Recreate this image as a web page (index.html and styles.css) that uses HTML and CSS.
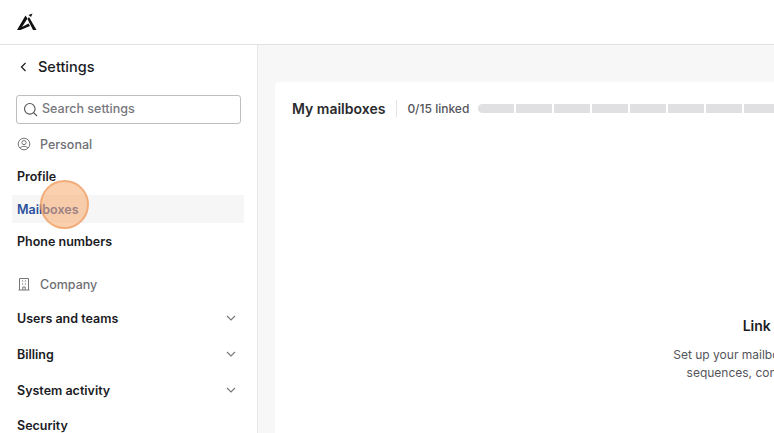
FILE: index.html
```html
<!DOCTYPE html>
<html lang="en">
<head>
  <meta charset="UTF-8" />
  <meta name="viewport" content="width=device-width, initial-scale=1" />
  <title>Settings - My mailboxes</title>
  <link rel="stylesheet" href="styles.css">
</head>
<body>
  <header class="topbar">
    <svg class="logo" width="22" height="18" viewBox="0 0 22 18">
      <path d="M1 17 L9.5 2.5 L11.5 5.5 L6 14 L12.5 10.5 L14 13 L4.5 17 Z" fill="#111"/>
      <path d="M11.5 6 L13 4 L20.5 17 L17 17 Z" fill="#111"/>
      <path d="M12.5 2 L16.5 0.5 L15 4 Z" fill="#111"/>
    </svg>
  </header>

  <div class="layout">
    <aside class="sidebar">
      <div class="back">
        <svg width="8" height="10" viewBox="0 0 8 10"><path d="M5.5 1 L1.5 5 L5.5 9" fill="none" stroke="#222" stroke-width="1.3"/></svg>
        <span>Settings</span>
      </div>

      <div class="search">
        <svg width="15" height="15" viewBox="0 0 15 15"><circle cx="6.8" cy="6.8" r="5.3" fill="none" stroke="#555" stroke-width="1.1"/><path d="M10.6 10.6 L14 14" stroke="#555" stroke-width="1.1"/></svg>
        <span>Search settings</span>
      </div>

      <div class="group-label personal">
        <svg width="14" height="14" viewBox="0 0 14 14"><circle cx="7" cy="7" r="5.8" fill="none" stroke="#777" stroke-width="1"/><circle cx="7" cy="5.6" r="2.1" fill="none" stroke="#777" stroke-width="1"/><path d="M3.2 11 C4.2 8.8 9.8 8.8 10.8 11" fill="none" stroke="#777" stroke-width="1"/></svg>
        <span>Personal</span>
      </div>
      <a class="item profile">Profile</a>
      <a class="item active">Mailboxes</a>
      <a class="item">Phone numbers</a>

      <div class="group-label company">
        <svg width="14" height="14" viewBox="0 0 14 14"><path d="M2.5 13 V1.5 H11.5 V13 M1.5 13 H12.5 M5.8 13 V10 H8.2 V13" fill="none" stroke="#777" stroke-width="1"/><path d="M5 4 H6.2 M7.8 4 H9 M5 7 H6.2 M7.8 7 H9" stroke="#777" stroke-width="1"/></svg>
        <span>Company</span>
      </div>
      <a class="item has-sub">Users and teams <svg class="chev" width="10" height="6" viewBox="0 0 10 6"><path d="M1 1 L5 5 L9 1" fill="none" stroke="#777" stroke-width="1.1"/></svg></a>
      <a class="item has-sub">Billing <svg class="chev" width="10" height="6" viewBox="0 0 10 6"><path d="M1 1 L5 5 L9 1" fill="none" stroke="#777" stroke-width="1.1"/></svg></a>
      <a class="item has-sub">System activity <svg class="chev" width="10" height="6" viewBox="0 0 10 6"><path d="M1 1 L5 5 L9 1" fill="none" stroke="#777" stroke-width="1.1"/></svg></a>
      <a class="item security">Security</a>
    </aside>

    <main class="main">
      <section class="card">
        <div class="card-head">
          <h2>My mailboxes</h2>
          <span class="divider"></span>
          <span class="linked">0/15 linked</span>
          <div class="meter">
            <i></i><i></i><i></i><i></i><i></i><i></i><i></i><i></i><i></i><i></i><i></i><i></i><i></i><i></i><i></i>
          </div>
        </div>
        <div class="empty">
          <h3>Link your mailbox</h3>
          <p>Set up your mailboxes to send and track mail,</p>
          <p>sequences, connect calendars and more</p>
        </div>
      </section>
    </main>
  </div>

  <!-- click highlight -->
  <div class="spot"></div>
</body>
</html>
```

FILE: styles.css
```css
html, body {
  height: 100%;
}

body {
  margin: 0;
  font-family: 'Inter', sans-serif;
  color: #1b1b1f;
  background: #fff;
  overflow: hidden;
  position: relative;
}

.topbar {
  height: 44px;
  border-bottom: 1px solid #e2e2e4;
  display: flex;
  align-items: center;
  padding-left: 16px;
}

.layout {
  display: flex;
  height: 388px;
}

/* Sidebar */
.sidebar {
  width: 258px;
  flex: none;
  border-right: 1px solid #e8e8ea;
  box-sizing: border-box;
  padding: 0 13px 0 12px;
}

.back {
  display: flex;
  align-items: center;
  gap: 10px;
  height: 43px;
  padding: 0 0 1px 8px;
  font-size: 14.5px;
  font-weight: 500;
}

.search {
  display: flex;
  align-items: center;
  gap: 4px;
  height: 26px;
  margin: 6px 3px 0 4px;
  padding: 0 0 1px 6px;
  border: 1px solid #bdbdc2;
  border-radius: 3px;
  font-size: 12.5px;
  font-weight: 500;
  line-height: 14px;
  color: #77777d;
}

.group-label {
  display: flex;
  align-items: center;
  gap: 9px;
  padding-left: 5px;
  font-size: 12.5px;
  font-weight: 500;
  color: #6f6f75;
  height: 20px;
}

.group-label.personal {
  margin-top: 10px;
  margin-bottom: 8px;
}

.group-label.company {
  margin-top: 19px;
  margin-bottom: 10px;
}

.item {
  display: flex;
  align-items: center;
  justify-content: space-between;
  height: 28px;
  padding: 0 8px 0 5px;
  margin-bottom: 4px;
  font-size: 12.5px;
  font-weight: 600;
  color: #1b1b1f;
}

.item.profile {
  margin-bottom: 5px;
}

.item.active {
  background: #f6f6f7;
  color: #2a4f9c;
}

.item.has-sub {
  margin-bottom: 8px;
}

.item.security {
  margin-top: -1px;
}

/* Main area */
.main {
  flex: 1;
  min-width: 0;
  background: #f7f7f7;
  padding: 37px 0 0 17px;
}

.card {
  width: 1054px;
  height: 500px;
  background: #fff;
  border-radius: 3px;
}

.card-head {
  display: flex;
  align-items: center;
  height: 53px;
  padding-left: 17px;
}

.card-head h2 {
  margin: 0;
  font-size: 14px;
  font-weight: 600;
  color: #2a2a2e;
}

.divider {
  width: 1px;
  height: 17px;
  background: #e4e4e6;
  margin: 0 10px 0 11px;
}

.linked {
  font-size: 12px;
  font-weight: 500;
  color: #55555b;
  margin-right: 9px;
}

.meter {
  display: flex;
  gap: 2px;
}

.meter i {
  display: block;
  width: 36px;
  height: 9px;
  background: #e0e0e3;
}

.meter i:first-child {
  border-radius: 5px 0 0 5px;
}

.empty {
  text-align: center;
  padding-top: 182px;
  white-space: nowrap;
}

.empty h3 {
  margin: 0 0 12px;
  font-size: 14px;
  font-weight: 600;
  color: #1b1b1f;
}

.empty p {
  margin: 0;
  font-size: 12px;
  line-height: 18px;
  color: #55555b;
}

/* Click highlight */
.spot {
  position: absolute;
  left: 40px;
  top: 180px;
  width: 49px;
  height: 49px;
  box-sizing: border-box;
  border-radius: 50%;
  background: rgba(248, 170, 110, 0.55);
  border: 2px solid rgba(240, 160, 100, 0.7);
}
```
